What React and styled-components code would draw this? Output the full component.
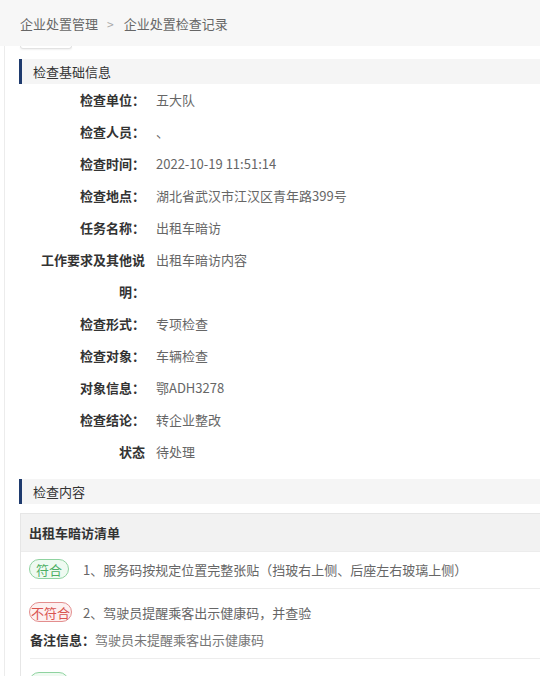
import React from 'react';
import styled, { createGlobalStyle } from 'styled-components';

const GlobalStyle = createGlobalStyle`
  html, body {
    margin: 0;
    padding: 0;
    background: #fff;
    overflow-x: hidden;
  }
  body {
    font-family: "Noto Sans CJK SC", "Liberation Sans", sans-serif;
    font-size: 13px;
    color: #333;
  }
`;

const Header = styled.div`
  height: 46px;
  background: #f7f7f7;
  display: flex;
  align-items: center;
  padding-left: 20px;
  color: #666;
`;

const Sep = styled.span`
  color: #aaa;
  margin: 0 10px 0 9px;
  font-size: 12px;
`;

const Body = styled.div`
  margin-left: 4px;
  border-left: 1px solid #ececec;
  padding-left: 14px;
  padding-bottom: 40px;
`;

const StubButton = styled.div`
  width: 50px;
  height: 2px;
  margin-left: 1px;
  border: 1px solid #e2e2e2;
  border-top: none;
  border-radius: 0 0 4px 4px;
  box-shadow: 0 1px 2px rgba(0, 0, 0, 0.06);
`;

const SectionTitle = styled.div`
  height: 25px;
  display: flex;
  align-items: center;
  background: #f5f5f5;
  border-left: 3px solid #1f3b6e;
  padding-left: 11px;
  margin-top: ${(p) => p.top}px;
  color: #333;
`;

const InfoList = styled.div`
  display: grid;
  grid-template-columns: 104px 1fr;
  column-gap: 11px;
  padding-left: 22px;
  line-height: 32px;
`;

const Label = styled.div`
  text-align: right;
  font-weight: bold;
  color: #333;
`;

const Value = styled.div`
  color: #666;
`;

const Card = styled.div`
  margin-top: 9px;
  margin-left: 1px;
  border: 1px solid #e6e6e6;
  border-right: none;
`;

const CardHead = styled.div`
  height: 37px;
  display: flex;
  align-items: center;
  padding-left: 8px;
  background: #f2f2f2;
  font-weight: bold;
  color: #333;
  border-bottom: 1px solid #ececec;
`;

const Items = styled.div`
  padding: 0 0 0 8px;
`;

const Item = styled.div`
  padding: ${(p) => (p.first ? '5px 0 7px' : '11px 0 7px')};
  border-bottom: 1px solid #ededed;
  margin-left: 1px;
`;

const Line = styled.div`
  display: flex;
  align-items: center;
  height: 24px;
  color: #666;
  white-space: nowrap;
`;

const TagBox = styled.span`
  width: 53px;
  flex: none;
  display: flex;
`;

const Tag = styled.span`
  display: inline-flex;
  align-items: center;
  justify-content: center;
  height: 20px;
  box-sizing: border-box;
  padding: 0 ${(p) => (p.ok ? 6 : 1)}px;
  border-radius: 10px;
  border: 1px solid ${(p) => (p.ok ? '#8fd3a0' : '#e38e8e')};
  background: ${(p) => (p.ok ? '#effaf1' : '#fdf0f0')};
  color: ${(p) => (p.ok ? '#4caf64' : '#d9534f')};
  margin-left: -1px;
`;

const Note = styled.div`
  margin-top: 3px;
  height: 24px;
  display: flex;
  align-items: center;
  color: #777;
`;

const NoteLabel = styled.span`
  font-weight: bold;
  color: #333;
`;

const info = [
  ['检查单位：', '五大队'],
  ['检查人员：', '、'],
  ['检查时间：', '2022-10-19 11:51:14'],
  ['检查地点：', '湖北省武汉市江汉区青年路399号'],
  ['任务名称：', '出租车暗访'],
  ['工作要求及其他说明：', '出租车暗访内容'],
  ['检查形式：', '专项检查'],
  ['检查对象：', '车辆检查'],
  ['对象信息：', '鄂ADH3278'],
  ['检查结论：', '转企业整改'],
  ['状态', '待处理'],
];

const items = [
  { ok: true, text: '1、服务码按规定位置完整张贴（挡玻右上侧、后座左右玻璃上侧）' },
  { ok: false, text: '2、驾驶员提醒乘客出示健康码，并查验', note: '驾驶员未提醒乘客出示健康码' },
  { ok: true, text: '3、驾驶员按要求保持车内整洁卫生，并提醒乘客文明乘车规范用语' },
];

export default function App() {
  return (
    <>
      <GlobalStyle />
      <Header>
        <span>企业处置管理</span>
        <Sep>&gt;</Sep>
        <span>企业处置检查记录</span>
      </Header>
      <Body>
        <StubButton />
        <SectionTitle top={10}>检查基础信息</SectionTitle>
        <InfoList>
          {info.map(([k, v]) => (
            <React.Fragment key={k}>
              <Label>{k}</Label>
              <Value>{v}</Value>
            </React.Fragment>
          ))}
        </InfoList>
        <SectionTitle top={11}>检查内容</SectionTitle>
        <Card>
          <CardHead>出租车暗访清单</CardHead>
          <Items>
            {items.map((it, i) => (
              <Item key={i} first={i === 0}>
                <Line>
                  <TagBox>
                    <Tag ok={it.ok}>{it.ok ? '符合' : '不符合'}</Tag>
                  </TagBox>
                  {it.text}
                </Line>
                {it.note && (
                  <Note>
                    <NoteLabel>备注信息：</NoteLabel>
                    {it.note}
                  </Note>
                )}
              </Item>
            ))}
          </Items>
        </Card>
      </Body>
    </>
  );
}
